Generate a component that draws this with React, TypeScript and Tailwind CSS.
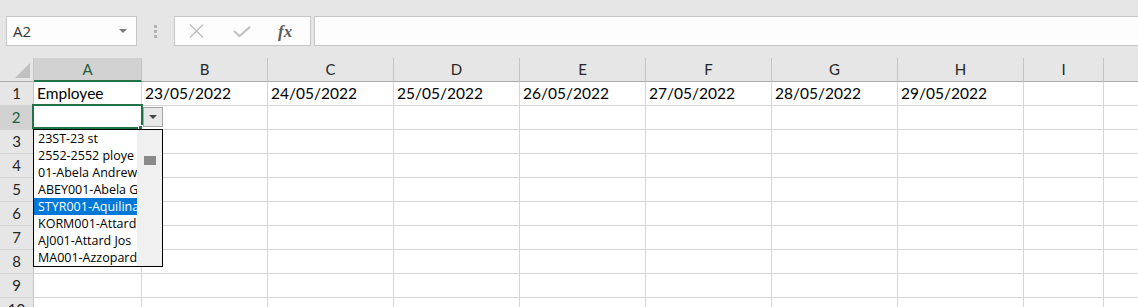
import React from "react";

const columns = [
  { label: "A", width: "w-[108px]" },
  { label: "B", width: "w-[126px]" },
  { label: "C", width: "w-[126px]" },
  { label: "D", width: "w-[126px]" },
  { label: "E", width: "w-[126px]" },
  { label: "F", width: "w-[126px]" },
  { label: "G", width: "w-[126px]" },
  { label: "H", width: "w-[126px]" },
  { label: "I", width: "w-[80px]" },
];

const firstRow = [
  "Employee",
  "23/05/2022",
  "24/05/2022",
  "25/05/2022",
  "26/05/2022",
  "27/05/2022",
  "28/05/2022",
  "29/05/2022",
  "",
];

// list is narrower than the names, so they get clipped like in excel
const options = [
  "23ST-23 st",
  "2552-2552 ploye",
  "01-Abela Andrew",
  "ABEY001-Abela G",
  "STYR001-Aquilina",
  "KORM001-Attard",
  "AJ001-Attard Jos",
  "MA001-Azzopard",
];

const rows = [1, 2, 3, 4, 5, 6, 7, 8, 9, 10];

const FormulaBar = () => (
  <div className="flex h-[58px] items-start bg-[#e6e6e6] pt-[16px]">
    <div className="ml-[6px] flex h-[30px] w-[131px] items-center justify-between border border-[#c6c6c6] bg-[#fdfdfd] pl-[6px] pr-[9px]">
      <span className="text-[15px] text-[#333] font-['Open_Sans',sans-serif]">A2</span>
      <span className="h-0 w-0 border-x-[4px] border-t-[4px] border-x-transparent border-t-[#7a7a7a]" />
    </div>
    <div className="ml-[17px] mt-[9px] flex w-[4px] flex-col gap-[2px]">
      <span className="h-[3px] w-[3px] bg-[#b3b3b3]" />
      <span className="h-[3px] w-[3px] bg-[#b3b3b3]" />
      <span className="h-[3px] w-[3px] bg-[#b3b3b3]" />
    </div>
    <div className="ml-[16px] flex h-[30px] w-[137px] items-center border border-[#c6c6c6] bg-[#fdfdfd]">
      <svg className="ml-[14px]" width="15" height="14" viewBox="0 0 15 14">
        <path d="M1 0.5 L14 13.5 M14 0.5 L1 13.5" stroke="#bdbdbd" strokeWidth="1.4" fill="none" />
      </svg>
      <svg className="ml-[29px]" width="18" height="11" viewBox="0 0 18 11">
        <path d="M1 5 L6.5 10 L17 0.8" stroke="#c2c2c2" strokeWidth="2.2" fill="none" />
      </svg>
      <span className="ml-[27px] text-[17px] font-semibold italic leading-none text-[#5c5c5c] font-['Liberation_Serif',serif]">
        fx
      </span>
    </div>
    <div className="ml-[3px] h-[30px] flex-1 border border-r-0 border-[#c6c6c6] bg-[#fdfdfd]" />
  </div>
);

const HeaderRow = () => (
  <div className="flex h-[24px] bg-[#e6e6e6]">
    <div className="relative w-[34px] shrink-0 border-r border-b border-r-[#c4c4c4] border-b-[#ababab]">
      <svg className="absolute left-[15px] top-[5px]" width="15" height="15" viewBox="0 0 15 15">
        <polygon points="15,0 15,15 0,15" fill="#c0c0c0" />
      </svg>
    </div>
    {columns.map((c) => (
      <div
        key={c.label}
        className={`${c.width} shrink-0 flex items-center justify-center border-r border-r-[#c4c4c4] text-[15px] ${
          c.label === "A"
            ? "bg-[#d2d2d2] border-b-2 border-b-[#217346] text-[#1d5e3a]"
            : "border-b border-b-[#ababab] text-[#262626]"
        }`}
      >
        {c.label}
      </div>
    ))}
    <div className="flex-1 border-b border-b-[#ababab]" />
  </div>
);

const SheetRow = ({ n }: { n: number }) => (
  <div className="flex h-[24px] bg-white">
    <div
      className={`w-[34px] shrink-0 flex items-center justify-center border-b border-b-[#d4d4d4] text-[15px] ${
        n === 2
          ? "bg-[#d2d2d2] border-r-2 border-r-[#217346] text-[#1d5e3a]"
          : "bg-[#e6e6e6] border-r border-r-[#c4c4c4] text-[#262626]"
      }`}
    >
      {n}
    </div>
    {columns.map((c, i) => (
      <div
        key={c.label}
        className={`${c.width} shrink-0 flex items-center overflow-hidden whitespace-nowrap border-r border-b border-[#d4d4d4] pl-[3px] text-[15.5px] text-black`}
      >
        {n === 1 ? firstRow[i] : ""}
      </div>
    ))}
    <div className="flex-1 border-b border-[#d4d4d4]" />
  </div>
);

const ValidationList = () => (
  <div className="absolute left-[33px] top-[71px] flex h-[138px] w-[130px] border border-black bg-white font-['Open_Sans',sans-serif] text-[12.5px] text-black">
    <div className="flex w-[103px] flex-col">
      {options.map((o, i) => (
        <div
          key={o}
          className={`h-[17px] overflow-hidden whitespace-nowrap pl-[4px] leading-[17px] ${
            i === 4 ? "bg-[#0078d7] text-white" : ""
          }`}
        >
          {o}
        </div>
      ))}
    </div>
    <div className="flex flex-1 justify-center bg-[#f0f0f0] pt-[26px]">
      <div className="h-[9px] w-[12px] bg-[#8a8a8a]" />
    </div>
  </div>
);

const App = () => {
  return (
    <div className="h-[307px] w-[1138px] overflow-hidden bg-white font-['Lato',sans-serif]">
      <FormulaBar />
      <div className="relative">
        <HeaderRow />
        {rows.map((n) => (
          <SheetRow key={n} n={n} />
        ))}
        {/* active cell A2 */}
        <div className="absolute left-[32px] top-[46px] h-[25px] w-[111px] border-2 border-[#217346]" />
        <div className="absolute left-[138px] top-[67px] h-[5px] w-[5px] border border-white bg-[#217346]" />
        {/* dropdown arrow */}
        <div className="absolute left-[143px] top-[49px] flex h-[20px] w-[20px] items-center justify-center border border-[#a6a6a6] bg-[#e8e8e8]">
          <span className="h-0 w-0 border-x-[4px] border-t-[4px] border-x-transparent border-t-[#444]" />
        </div>
        <ValidationList />
      </div>
    </div>
  );
};

export default App;
